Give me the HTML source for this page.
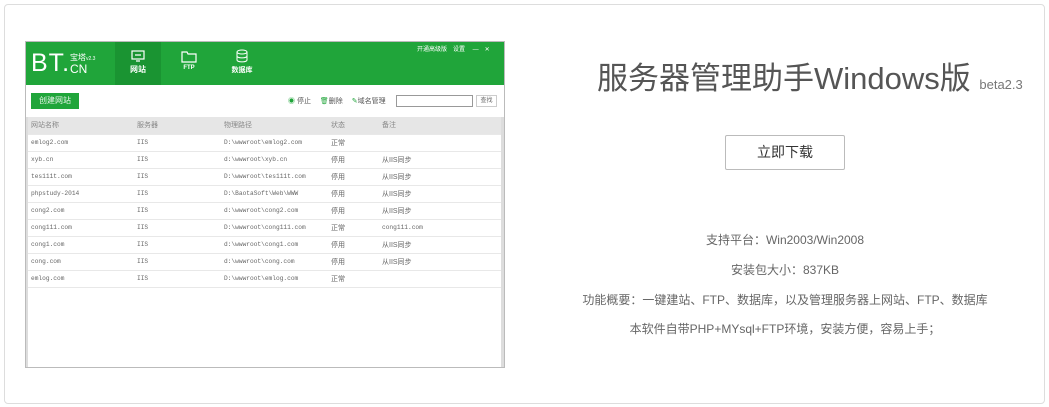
<!DOCTYPE html>
<html><head><meta charset="utf-8"><style>
*{margin:0;padding:0;box-sizing:border-box}
body{width:1049px;height:407px;background:#fff;font-family:"Liberation Sans","Noto Sans CJK SC",sans-serif;position:relative;overflow:hidden}
.card{position:absolute;left:4px;top:4px;width:1041px;height:400px;border:1px solid #ddd;border-radius:4px}
.shot{position:absolute;left:25px;top:41px;width:480px;height:327px;border:1px solid #bbb;background:#fff;overflow:hidden}
.hdr{position:absolute;left:0;top:0;width:480px;height:43px;background:#20a53a}
.tab{position:absolute;top:0;height:43px;width:46px;color:#fff;font-size:8px;text-align:center}
.btn{position:absolute;left:5px;top:51px;width:48px;height:16px;background:#20a53a;color:#e8f5ea;font-size:8px;line-height:16px;text-align:center}
table{position:absolute;left:2px;top:75px;width:474px;border-collapse:collapse;font-size:6.2px;color:#666}
td{height:17px;border-bottom:1px solid #e8e8e8;font-family:"Liberation Mono","Noto Sans CJK SC",monospace;white-space:nowrap;padding-left:3px}
td.c{font-family:"Liberation Sans","Noto Sans CJK SC",sans-serif;font-size:7px}
tr.h td{background:#e6e6e6;color:#888;font-family:"Liberation Sans","Noto Sans CJK SC",sans-serif;font-size:7px;height:17px}
.r{position:absolute;text-align:center;left:540px;width:490px;color:#666}
</style></head><body>
<div class="card"></div>
<div class="shot">
<div class="hdr">
<div style="position:absolute;left:5px;top:7px;color:#fff;font-size:25px;letter-spacing:1px">BT.</div>
<div style="position:absolute;left:44px;top:10px;color:#fff;font-size:8px">宝塔<span style="font-size:5px">v2.3</span></div>
<div style="position:absolute;left:44px;top:20px;color:#fff;font-size:12px">CN</div>
<div class="tab" style="left:89px;background:#1a9432"><svg width="14" height="12" style="margin-top:8px" viewBox="0 0 14 12"><rect x="1" y="1" width="12" height="8" fill="none" stroke="#fff" stroke-width="1.2"/><path d="M4 5h6M5 11h4" stroke="#fff" stroke-width="1.2"/></svg><div style="font-weight:bold">网站</div></div>
<div class="tab" style="left:140px"><svg width="16" height="13" style="margin-top:8px" viewBox="0 0 16 13"><path d="M1 2h5l1 2h8v8H1z" fill="none" stroke="#fff" stroke-width="1.2"/></svg><div style="font-weight:bold;font-size:6px">FTP</div></div>
<div class="tab" style="left:193px"><svg width="12" height="14" style="margin-top:7px" viewBox="0 0 12 14"><ellipse cx="6" cy="3" rx="5" ry="2" fill="none" stroke="#fff"/><path d="M1 3v8c0 2.5 10 2.5 10 0V3M1 7c0 2.5 10 2.5 10 0" fill="none" stroke="#fff"/></svg><div style="font-weight:bold;font-size:7px">数据库</div></div>
<div style="position:absolute;left:391px;top:2px;color:#fff;font-size:6px">开通高级版　设置　 —　✕</div>
</div>
<div class="btn">创建网站</div>
<div style="position:absolute;left:262px;top:54px;font-size:7px;color:#20a53a">◉ <span style="color:#555">停止</span>　 🗑<span style="color:#555">删除</span>　 ✎<span style="color:#555">域名管理</span></div>
<div style="position:absolute;left:370px;top:53px;width:77px;height:12px;border:1px solid #999"></div>
<div style="position:absolute;left:450px;top:53px;width:21px;height:12px;border:1px solid #ccc;font-size:6px;color:#666;text-align:center;line-height:10px">查找</div>
<table>
<tr class="h"><td style="width:106px">网站名称</td><td style="width:87px">服务器</td><td style="width:107px">物理路径</td><td style="width:51px">状态</td><td>备注</td></tr>
<tr><td>emlog2.com</td><td>IIS</td><td>D:\wwwroot\emlog2.com</td><td class="c">正常</td><td></td></tr>
<tr><td>xyb.cn</td><td>IIS</td><td>d:\wwwroot\xyb.cn</td><td class="c">停用</td><td class="c">从IIS同步</td></tr>
<tr><td>tes111t.com</td><td>IIS</td><td>D:\wwwroot\tes111t.com</td><td class="c">停用</td><td class="c">从IIS同步</td></tr>
<tr><td>phpstudy-2014</td><td>IIS</td><td>D:\BaotaSoft\Web\WWW</td><td class="c">停用</td><td class="c">从IIS同步</td></tr>
<tr><td>cong2.com</td><td>IIS</td><td>d:\wwwroot\cong2.com</td><td class="c">停用</td><td class="c">从IIS同步</td></tr>
<tr><td>cong111.com</td><td>IIS</td><td>D:\wwwroot\cong111.com</td><td class="c">正常</td><td>cong111.com</td></tr>
<tr><td>cong1.com</td><td>IIS</td><td>d:\wwwroot\cong1.com</td><td class="c">停用</td><td class="c">从IIS同步</td></tr>
<tr><td>cong.com</td><td>IIS</td><td>d:\wwwroot\cong.com</td><td class="c">停用</td><td class="c">从IIS同步</td></tr>
<tr><td>emlog.com</td><td>IIS</td><td>D:\wwwroot\emlog.com</td><td class="c">正常</td><td></td></tr>
</table>
<div style="position:absolute;left:0;top:75px;width:2px;height:252px;background:#ddd"></div>
<div style="position:absolute;right:0;top:75px;width:3px;height:252px;background:#ddd"></div>
</div>
<div style="position:absolute;left:597px;top:53px;font-size:31px;color:#555;white-space:nowrap">服务器管理助手Windows版 <span style="font-size:13px;color:#777">beta2.3</span></div>
<div style="position:absolute;left:725px;top:135px;width:120px;height:35px;border:1px solid #bbb;border-radius:2px;font-size:14px;color:#333;text-align:center;line-height:33px">立即下载</div>
<div class="r" style="top:231px;font-size:12px">支持平台：Win2003/Win2008</div>
<div class="r" style="top:261px;font-size:12px">安装包大小：837KB</div>
<div class="r" style="top:291px;font-size:12px">功能概要：一键建站、FTP、数据库，以及管理服务器上网站、FTP、数据库</div>
<div class="r" style="top:320px;font-size:12px">本软件自带PHP+MYsql+FTP环境，安装方便，容易上手；</div>
</body></html>
